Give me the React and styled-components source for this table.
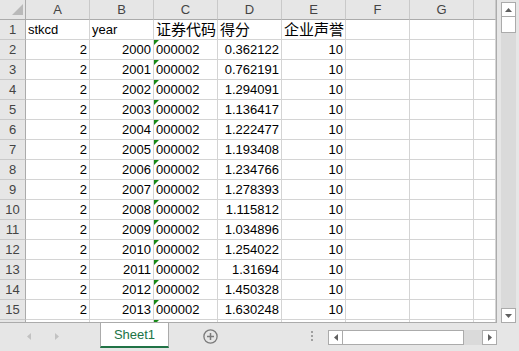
import React from "react";
import styled, { createGlobalStyle } from "styled-components";

const GlobalStyle = createGlobalStyle`
  html, body { margin: 0; padding: 0; background: #e6e6e6; }
  body { font-family: "Liberation Sans", "Noto Sans CJK SC", sans-serif; }
`;

const Window = styled.div`
  width: 519px;
  height: 351px;
  display: flex;
  flex-direction: column;
  background: #e6e6e6;
  overflow: hidden;
`;

const Workspace = styled.div`
  display: flex;
  height: 323px;
`;

const Sheet = styled.div`
  width: 497px;
  height: 323px;
  box-sizing: border-box;
  border-right: 1px solid #ababab;
  border-bottom: 1px solid #ababab;
  background: #fff;
  overflow: hidden;
  display: grid;
  grid-template-columns: 26px repeat(7, 64px) 22px;
  grid-auto-rows: 20px;
  align-content: start;
`;

const Corner = styled.div`
  box-sizing: border-box;
  background: #e6e6e6;
  border-right: 1px solid #ababab;
  border-bottom: 1px solid #ababab;
  display: flex;
  align-items: flex-end;
  justify-content: flex-end;
  padding: 0 2px 4px 0;
`;

const CornerMark = styled.div`
  width: 0;
  height: 0;
  border-left: 11px solid transparent;
  border-bottom: 11px solid #b9b9b9;
`;

const ColHead = styled.div`
  box-sizing: border-box;
  background: #e6e6e6;
  border-right: 1px solid #c9c9c9;
  border-bottom: 1px solid #ababab;
  color: #444;
  font-size: 13px;
  line-height: 19px;
  text-align: center;
`;

const RowHead = styled.div`
  box-sizing: border-box;
  background: #e6e6e6;
  border-right: 1px solid #ababab;
  border-bottom: 1px solid #c9c9c9;
  color: #444;
  font-size: 13px;
  line-height: 19px;
  text-align: center;
`;

const Cell = styled.div`
  position: relative;
  box-sizing: border-box;
  border-right: 1px solid #d4d4d4;
  border-bottom: 1px solid #d4d4d4;
  padding: 0 2px;
  color: #000;
  font-size: ${(p) => (p.$cjk ? "15px" : "13px")};
  line-height: 19px;
  text-align: ${(p) => (p.$right ? "right" : "left")};
  white-space: nowrap;
  overflow: hidden;

  &::before {
    content: "";
    display: ${(p) => (p.$flag ? "block" : "none")};
    position: absolute;
    top: 0;
    left: 0;
    width: 0;
    height: 0;
    border-top: 5px solid #178a17;
    border-right: 5px solid transparent;
  }
`;

const VScroll = styled.div`
  width: 22px;
  display: flex;
  flex-direction: column;
  padding: 2px 3px 0 4px;
  box-sizing: border-box;
`;

const ScrollBtn = styled.div`
  width: 15px;
  height: 15px;
  flex: none;
  box-sizing: border-box;
  background: #fff;
  border: 1px solid #ababab;
  display: flex;
  align-items: center;
  justify-content: center;
`;

const VThumb = styled.div`
  height: 16px;
  flex: none;
  box-sizing: border-box;
  background: #fff;
  border: 1px solid #ababab;
  border-top: none;
`;

const Track = styled.div`
  flex: 1;
  background: #dadada;
`;

const BottomBar = styled.div`
  height: 28px;
  display: flex;
  align-items: flex-start;
`;

const Nav = styled.div`
  width: 100px;
  height: 26px;
  display: flex;
  align-items: center;
  padding-left: 27px;
  gap: 24px;
  box-sizing: border-box;
`;

const Tab = styled.div`
  width: 69px;
  height: 25px;
  box-sizing: border-box;
  background: #fff;
  border-left: 1px solid #ababab;
  border-right: 1px solid #ababab;
  border-bottom: 2px solid #217346;
  color: #217346;
  font-size: 13px;
  line-height: 23px;
  text-align: center;
`;

const AddButton = styled.div`
  margin: 6px 0 0 34px;
  width: 15px;
  height: 15px;
  display: flex;
`;

const Spacer = styled.div`
  flex: 1;
`;

const Dots = styled.div`
  margin: 8px 15px 0 0;
  display: flex;
  flex-direction: column;
  gap: 2px;
`;

const Dot = styled.div`
  width: 2px;
  height: 2px;
  background: #a0a0a0;
`;

const HScroll = styled.div`
  margin: 7px 22px 0 0;
  width: 169px;
  height: 15px;
  display: flex;
`;

const HThumb = styled.div`
  width: 121px;
  height: 15px;
  box-sizing: border-box;
  background: #fff;
  border: 1px solid #ababab;
  border-left: none;
`;

const Arrow = ({ dir, color = "#606060", size = 7 }) => {
  const pts = {
    up: "0,4 7,4 3.5,0",
    down: "0,0 7,0 3.5,4",
    left: "4,0 4,7 0,3.5",
    right: "0,0 0,7 4,3.5",
  }[dir];
  const vertical = dir === "up" || dir === "down";
  return (
    <svg
      width={vertical ? size : 4}
      height={vertical ? 4 : size}
      viewBox={vertical ? "0 0 7 4" : "0 0 4 7"}
    >
      <polygon points={pts} fill={color} />
    </svg>
  );
};

const PlusCircle = () => (
  <svg width="15" height="15" viewBox="0 0 15 15">
    <circle cx="7.5" cy="7.5" r="6.6" fill="none" stroke="#7b7b7b" strokeWidth="1.3" />
    <path d="M7.5 4v7M4 7.5h7" stroke="#7b7b7b" strokeWidth="1.5" />
  </svg>
);

const columns = ["A", "B", "C", "D", "E", "F", "G", ""];

const scores = [
  "0.362122", "0.762191", "1.294091", "1.136417", "1.222477", "1.193408", "1.234766",
  "1.278393", "1.115812", "1.034896", "1.254022", "1.31694", "1.450328", "1.630248",
];

const rows = scores.map((score, i) => ({
  stkcd: "2",
  year: String(2000 + i),
  code: "000002",
  score,
  rep: "10",
}));

export default function App() {
  return (
    <>
      <GlobalStyle />
      <Window>
        <Workspace>
          <Sheet>
            <Corner>
              <CornerMark />
            </Corner>
            {columns.map((c, i) => (
              <ColHead key={i}>{c}</ColHead>
            ))}

            <RowHead>1</RowHead>
            <Cell>stkcd</Cell>
            <Cell>year</Cell>
            <Cell $cjk>证券代码</Cell>
            <Cell $cjk>得分</Cell>
            <Cell $cjk>企业声誉</Cell>
            <Cell />
            <Cell />
            <Cell />

            {rows.map((r, i) => (
              <React.Fragment key={r.year}>
                <RowHead>{i + 2}</RowHead>
                <Cell $right>{r.stkcd}</Cell>
                <Cell $right>{r.year}</Cell>
                <Cell $flag>{r.code}</Cell>
                <Cell $right>{r.score}</Cell>
                <Cell $right>{r.rep}</Cell>
                <Cell />
                <Cell />
                <Cell />
              </React.Fragment>
            ))}

            <RowHead />
            <Cell />
            <Cell />
            <Cell $flag />
            <Cell />
            <Cell />
            <Cell />
            <Cell />
            <Cell />
          </Sheet>
          <VScroll>
            <ScrollBtn>
              <Arrow dir="up" />
            </ScrollBtn>
            <VThumb />
            <Track />
            <ScrollBtn>
              <Arrow dir="down" />
            </ScrollBtn>
          </VScroll>
        </Workspace>
        <BottomBar>
          <Nav>
            <Arrow dir="left" color="#c2c2c2" />
            <Arrow dir="right" color="#c2c2c2" />
          </Nav>
          <Tab>Sheet1</Tab>
          <AddButton>
            <PlusCircle />
          </AddButton>
          <Spacer />
          <Dots>
            <Dot />
            <Dot />
            <Dot />
          </Dots>
          <HScroll>
            <ScrollBtn>
              <Arrow dir="left" />
            </ScrollBtn>
            <HThumb />
            <Track />
            <ScrollBtn>
              <Arrow dir="right" />
            </ScrollBtn>
          </HScroll>
        </BottomBar>
      </Window>
    </>
  );
}
